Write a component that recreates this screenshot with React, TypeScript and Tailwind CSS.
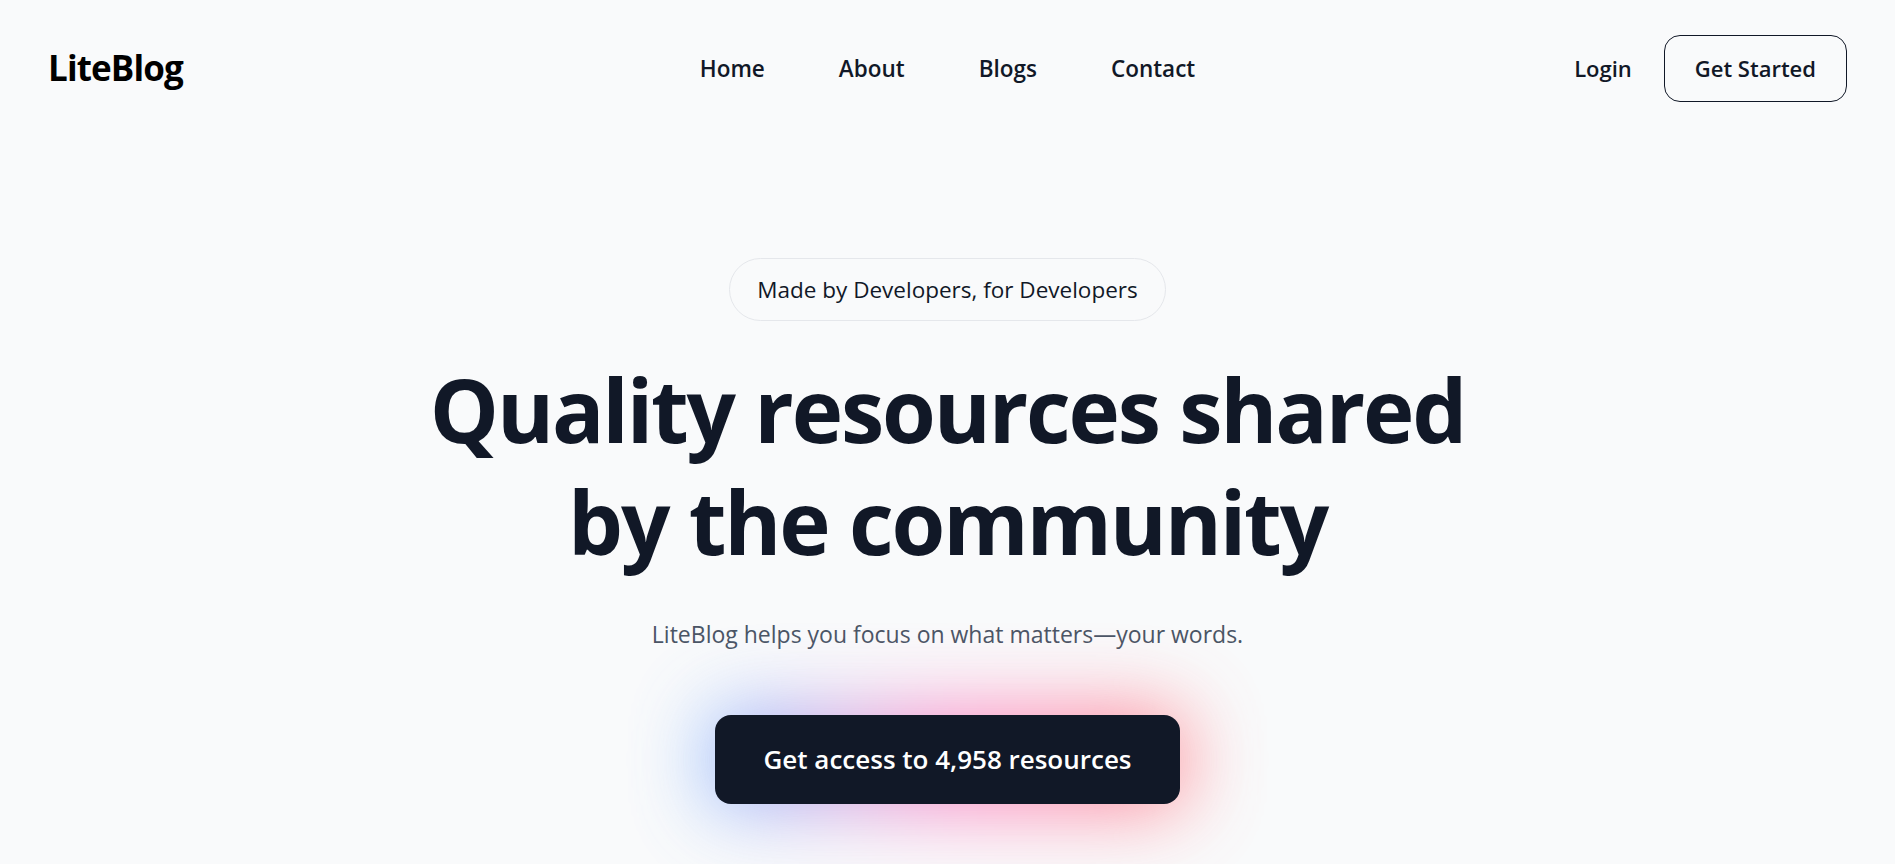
export default function App() {
  const links = ["Home", "About", "Blogs", "Contact"];

  return (
    <div className="min-h-screen bg-[#f9fafb] text-[#111827] font-['Open_Sans',sans-serif]">
      <header className="grid grid-cols-3 items-center px-12 pt-[35px]">
        <div className="text-[35px] font-bold text-black tracking-tight">LiteBlog</div>
        <nav className="flex justify-center gap-[74px] text-[22.5px] font-semibold">
          {links.map((l) => (
            <a key={l} href="#">
              {l}
            </a>
          ))}
        </nav>
        <div className="flex items-center justify-end gap-[32px] text-[22px] font-semibold">
          <a href="#">Login</a>
          <button className="rounded-2xl border border-[#111827] px-[30px] py-[14px] leading-[37px]">
            Get Started
          </button>
        </div>
      </header>

      <main className="flex flex-col items-center pt-[156px]">
        <div className="rounded-full border border-gray-200 px-[27px] py-[12px] text-[22.5px] leading-[37px]">
          Made by Developers, for Developers
        </div>

        <h1 className="mt-[32px] text-center text-[87px] font-bold leading-[112px] tracking-tight">
          Quality resources shared
          <br />
          by the community
        </h1>

        <p className="mt-[40px] text-[23px] text-gray-600">
          LiteBlog helps you focus on what matters—your words.
        </p>

        <div className="relative mt-[63px]">
          {/* glow behind the button */}
          <div className="absolute -inset-1 rounded-2xl bg-gradient-to-r from-blue-400 via-pink-400 to-red-400 opacity-75 blur-2xl" />
          <button className="relative rounded-2xl bg-[#111827] px-[48px] py-[27px] text-[26px] font-semibold leading-[35px] text-white">
            Get access to 4,958 resources
          </button>
        </div>
      </main>
    </div>
  );
}
